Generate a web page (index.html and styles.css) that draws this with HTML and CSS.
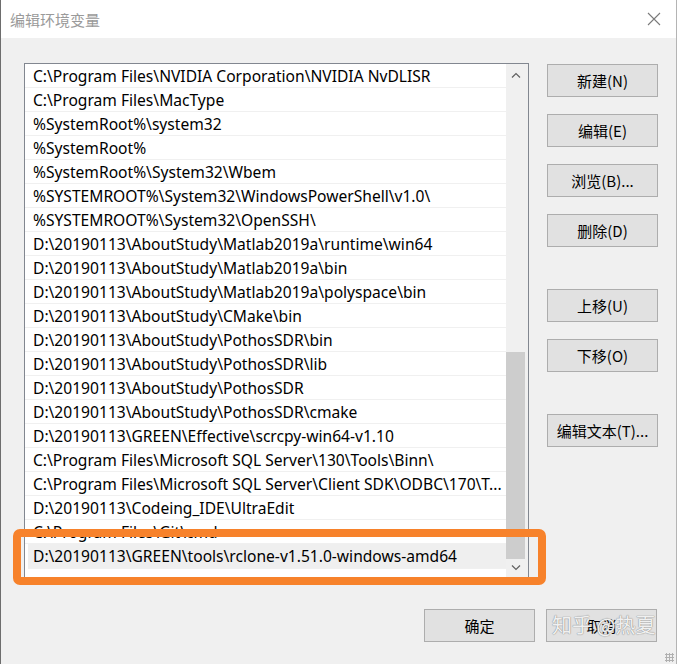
FILE: index.html
```html
<!DOCTYPE html>
<html lang="zh-CN">
<head>
    <meta charset="UTF-8">
    <title>编辑环境变量</title>
    <link rel="stylesheet" href="styles.css">
</head>
<body>
    <div class="window">
        <div class="titlebar">
            <span class="title">编辑环境变量</span>
            <svg class="close" width="14" height="14" viewBox="0 0 14 14">
                <path d="M1 1 L13 13 M13 1 L1 13" stroke="#7a7a7a" stroke-width="1.1" fill="none"/>
            </svg>
        </div>

        <div class="content">
            <div class="path-list">
                <div class="rows">
                    <div class="row">C:\Program Files\NVIDIA Corporation\NVIDIA NvDLISR</div>
                    <div class="row">C:\Program Files\MacType</div>
                    <div class="row">%SystemRoot%\system32</div>
                    <div class="row">%SystemRoot%</div>
                    <div class="row">%SystemRoot%\System32\Wbem</div>
                    <div class="row">%SYSTEMROOT%\System32\WindowsPowerShell\v1.0\</div>
                    <div class="row">%SYSTEMROOT%\System32\OpenSSH\</div>
                    <div class="row">D:\20190113\AboutStudy\Matlab2019a\runtime\win64</div>
                    <div class="row">D:\20190113\AboutStudy\Matlab2019a\bin</div>
                    <div class="row">D:\20190113\AboutStudy\Matlab2019a\polyspace\bin</div>
                    <div class="row">D:\20190113\AboutStudy\CMake\bin</div>
                    <div class="row">D:\20190113\AboutStudy\PothosSDR\bin</div>
                    <div class="row">D:\20190113\AboutStudy\PothosSDR\lib</div>
                    <div class="row">D:\20190113\AboutStudy\PothosSDR</div>
                    <div class="row">D:\20190113\AboutStudy\PothosSDR\cmake</div>
                    <div class="row">D:\20190113\GREEN\Effective\scrcpy-win64-v1.10</div>
                    <div class="row">C:\Program Files\Microsoft SQL Server\130\Tools\Binn\</div>
                    <div class="row">C:\Program Files\Microsoft SQL Server\Client SDK\ODBC\170\T...</div>
                    <div class="row">D:\20190113\Codeing_IDE\UltraEdit</div>
                    <div class="row">C:\Program Files\Git\cmd</div>
                    <div class="row selected">D:\20190113\GREEN\tools\rclone-v1.51.0-windows-amd64</div>
                </div>
                <div class="scrollbar">
                    <div class="arrow arrow-up">
                        <svg width="10" height="6" viewBox="0 0 10 6"><path d="M1 5.5 L5 1.5 L9 5.5" stroke="#606060" stroke-width="1.2" fill="none"/></svg>
                    </div>
                    <div class="track"></div>
                    <div class="thumb"></div>
                    <div class="arrow arrow-down">
                        <svg width="10" height="6" viewBox="0 0 10 6"><path d="M1 0.5 L5 4.5 L9 0.5" stroke="#606060" stroke-width="1.2" fill="none"/></svg>
                    </div>
                </div>
            </div>

            <div class="side-buttons">
                <button class="btn">新建(N)</button>
                <button class="btn">编辑(E)</button>
                <button class="btn">浏览(B)...</button>
                <button class="btn">删除(D)</button>
                <button class="btn gap-before">上移(U)</button>
                <button class="btn">下移(O)</button>
                <button class="btn gap-before">编辑文本(T)...</button>
            </div>
        </div>

        <div class="footer">
            <button class="btn">确定</button>
            <button class="btn">取消</button>
        </div>

        <div class="highlight"></div>
        <div class="watermark">知乎 @热夏</div>
        <div class="grip"></div>
    </div>
</body>
</html>
```

FILE: styles.css
```css
* {
    margin: 0;
    padding: 0;
    box-sizing: border-box;
}

body {
    width: 677px;
    height: 664px;
    overflow: hidden;
    background: #f0f0f0;
    font-family: "Noto Sans", "Noto Sans CJK SC", sans-serif;
    color: #000000;
}

.window {
    position: relative;
    width: 677px;
    height: 664px;
    background: #f0f0f0;
    border-left: 1px solid #6d6d6d;
    border-right: 1px solid #b4b4b4;
}

.titlebar {
    height: 38px;
    background: #ffffff;
    display: flex;
    align-items: center;
    justify-content: space-between;
    padding: 0 15px 0 9px;
}

.title {
    font-family: "Noto Sans CJK SC", sans-serif;
    font-size: 15px;
    color: #9a9a9a;
}

.content {
    display: flex;
    align-items: flex-start;
    padding: 25px 0 0 23px;
}

.path-list {
    width: 505px;
    height: 515px;
    background: #ffffff;
    border: 1px solid #828790;
    display: flex;
}

.rows {
    flex: 1;
    overflow: hidden;
}

.row {
    height: 24px;
    line-height: 24px;
    padding-left: 8px;
    font-size: 15.6px;
    border-bottom: 1px solid #f0f0f0;
    white-space: nowrap;
    overflow: hidden;
}

.row.selected {
    background: #efefef;
    margin-left: 3px;
    padding-left: 5px;
    height: 25px;
    line-height: 24px;
}

.scrollbar {
    width: 22px;
    background: #f0f0f0;
    display: flex;
    flex-direction: column;
}

.arrow {
    display: flex;
    align-items: center;
    justify-content: center;
    padding-right: 3px;
}

.arrow-up {
    height: 22px;
}

.arrow-down {
    height: 18px;
}

.track {
    height: 267px;
}

.thumb {
    height: 207px;
    background: #cdcdcd;
    margin-right: 3px;
}

.side-buttons {
    display: flex;
    flex-direction: column;
    gap: 17px;
    margin-left: 18px;
    margin-top: 1px;
}

.btn {
    width: 111px;
    height: 33px;
    background: #e1e1e1;
    border: 1px solid #adadad;
    font-family: "Noto Sans CJK SC", sans-serif;
    font-size: 15px;
    color: #000000;
}

.btn.gap-before {
    margin-top: 25px;
}

.footer {
    display: flex;
    justify-content: flex-end;
    gap: 11px;
    padding-right: 19px;
    margin-top: 31px;
}

.highlight {
    position: absolute;
    left: 12px;
    top: 529px;
    width: 533px;
    height: 56px;
    border: 8px solid #f7822b;
    border-radius: 7px;
}

.watermark {
    position: absolute;
    left: 551px;
    top: 610px;
    font-family: "Noto Sans CJK SC", sans-serif;
    font-size: 20px;
    color: rgba(255, 255, 255, 0.9);
    text-shadow: 0 0 1px #8a8a8a, 0 0 1px #8a8a8a;
}

.grip {
    position: absolute;
    right: 2px;
    bottom: 2px;
    width: 9px;
    height: 9px;
    background-image: radial-gradient(circle, #b0b0b0 1px, transparent 1.2px);
    background-size: 3px 3px;
}
```
